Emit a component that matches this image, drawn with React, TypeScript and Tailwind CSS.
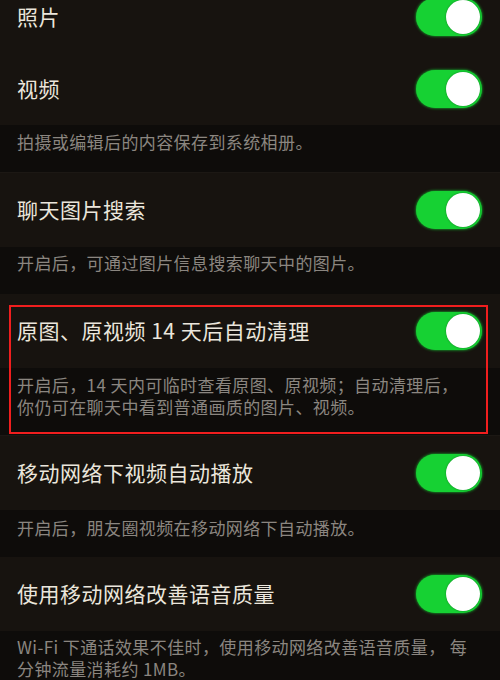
import React from 'react';

const Toggle: React.FC = () => (
  <div className="flex h-[38px] w-[66px] shrink-0 items-center justify-end rounded-full bg-[#16d133] p-[2px] shadow-[0_0_3px_#16d133]">
    <div className="h-[34px] w-[34px] rounded-full bg-white shadow-[0_0_2px_rgba(0,0,0,0.4)]" />
  </div>
);

const Row: React.FC<{ title: string; className?: string }> = ({ title, className = 'h-[74px]' }) => (
  <div className={`flex items-center justify-between bg-[#17130f] pl-[17px] pr-[18px] ${className}`}>
    <span className="text-[21px] tracking-[0.5px] text-[#ebe6dc]">{title}</span>
    <Toggle />
  </div>
);

const Footer: React.FC<{ children: React.ReactNode; className?: string }> = ({ children, className = '' }) => (
  <div className={`bg-[#0e0c0a] px-[17px] text-[17px] leading-[22px] tracking-[0.4px] text-[#8b8680] ${className}`}>
    {children}
  </div>
);

const App: React.FC = () => {
  return (
    <div
      className="h-[680px] w-[500px] overflow-hidden bg-[#0e0c0a]"
      style={{ fontFamily: '"Noto Sans CJK SC", "Noto Sans", sans-serif' }}
    >
      <Row title="照片" className="-mt-[20px] h-[73px]" />
      <Row title="视频" className="h-[72px]" />
      <Footer className="h-[47px] pt-[6px]">拍摄或编辑后的内容保存到系统相册。</Footer>

      <div className="h-px bg-[#1c1814]" />
      <Row title="聊天图片搜索" />
      <Footer className="h-[47px] pt-[5px]">开启后，可通过图片信息搜索聊天中的图片。</Footer>

      <div className="relative">
        <Row title="原图、原视频 14 天后自动清理" />
        <Footer className="h-[67px] pt-[6px]">
          开启后，14 天内可临时查看原图、原视频；自动清理后，
          <br />
          你仍可在聊天中看到普通画质的图片、视频。
        </Footer>
        <div className="pointer-events-none absolute bottom-[1px] left-[9px] right-[12px] top-[11px] border-2 border-[#f01e1e]" />
      </div>

      <div className="h-px bg-[#1c1814]" />
      <Row title="移动网络下视频自动播放" />
      <Footer className="h-[47px] pt-[7px]">开启后，朋友圈视频在移动网络下自动播放。</Footer>

      <Row title="使用移动网络改善语音质量" />
      <Footer className="pt-[5px]">
        Wi-Fi 下通话效果不佳时，使用移动网络改善语音质量， 每
        <br />
        分钟流量消耗约 1MB。
      </Footer>
    </div>
  );
};

export default App;
